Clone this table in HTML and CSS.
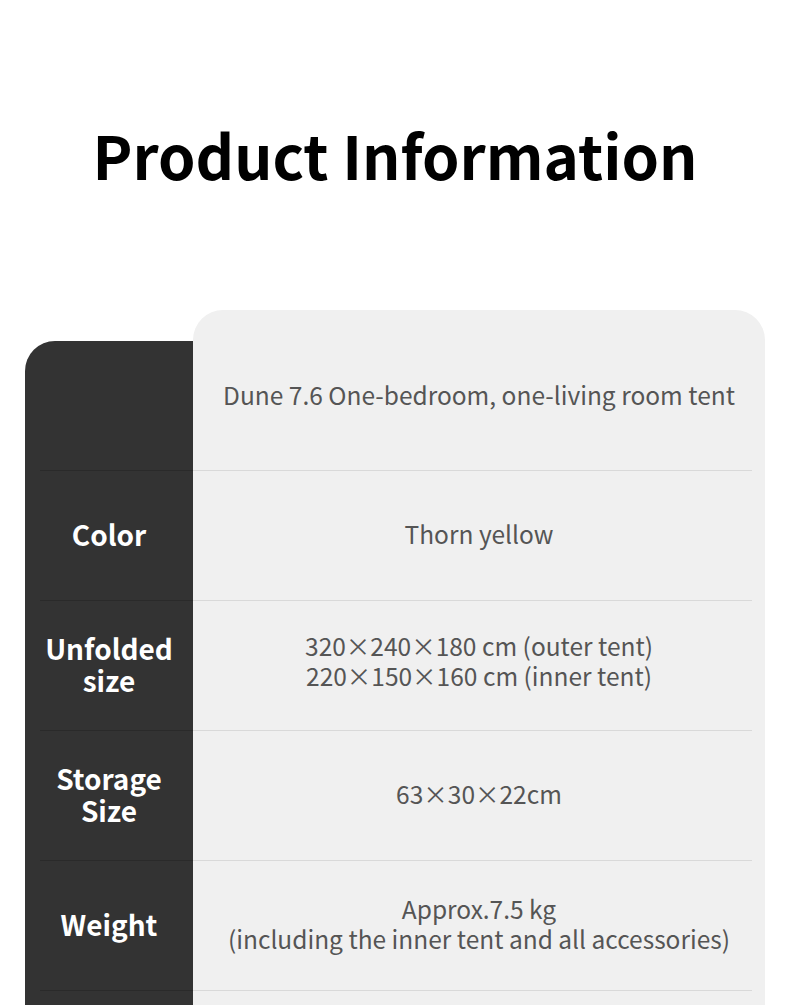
FILE: index.html
```html
<!DOCTYPE html>
<html lang="en">
<head>
<meta charset="utf-8">
<title>Product Information</title>
<link rel="stylesheet" href="styles.css">
</head>
<body>
<h1 class="title">Product Information</h1>
<div class="card">
  <div class="row row-first">
    <div class="label label-first"></div>
    <div class="value value-first"><p>Dune 7.6 One-bedroom, one-living room tent</p></div>
  </div>
  <div class="row">
    <div class="label"><p>Color</p></div>
    <div class="value"><p>Thorn yellow</p></div>
  </div>
  <div class="row">
    <div class="label"><p>Unfolded<br>size</p></div>
    <div class="value value-up"><p>320×240×180 cm (outer tent)<br>220×150×160 cm (inner tent)</p></div>
  </div>
  <div class="row">
    <div class="label"><p>Storage<br>Size</p></div>
    <div class="value"><p>63×30×22cm</p></div>
  </div>
  <div class="row">
    <div class="label"><p>Weight</p></div>
    <div class="value"><p>Approx.7.5 kg<br>(including the inner tent and all accessories)</p></div>
  </div>
  <div class="row">
    <div class="label"><p></p></div>
    <div class="value"><p></p></div>
  </div>
</div>
</body>
</html>
```
FILE: styles.css
```css
html, body {
  margin: 0;
  padding: 0;
  background: #ffffff;
}
body {
  font-family: "Noto Sans CJK SC", "Noto Sans", sans-serif;
  width: 790px;
  overflow: hidden;
}
.title {
  margin: 124px 0 0;
  font-size: 60px;
  line-height: 60px;
  font-weight: 700;
  color: #000;
  text-align: center;
  letter-spacing: 0;
}
.card {
  margin: 126px 25px 0;
  display: flex;
  flex-direction: column;
}
.row {
  display: grid;
  grid-template-columns: 168px 572px;
  height: 130px;
}
.row-first {
  height: 160px;
}
.label, .value {
  display: flex;
  align-items: center;
  justify-content: center;
  text-align: center;
  box-sizing: border-box;
  padding-bottom: 3px;
}
.label p, .value p {
  margin: 0;
}
.label {
  background: #333333 linear-gradient(#2a2a2a, #2a2a2a) no-repeat right top / calc(100% - 15px) 1px;
  color: #ffffff;
  font-size: 28px;
  font-weight: 700;
  line-height: 32px;
}
.value {
  background: #f0f0f0 linear-gradient(#d9d9d9, #d9d9d9) no-repeat left top / calc(100% - 13px) 1px;
  color: #555555;
  font-size: 24.5px;
  line-height: 30px;
}
.value-up {
  padding-bottom: 8px;
}
.label-first {
  margin-top: 31px;
  border-top-left-radius: 30px;
  background: #333333;
}
.value-first {
  background: #f0f0f0;
  border-radius: 30px 30px 0 0;
  padding-top: 12px;
}
```
